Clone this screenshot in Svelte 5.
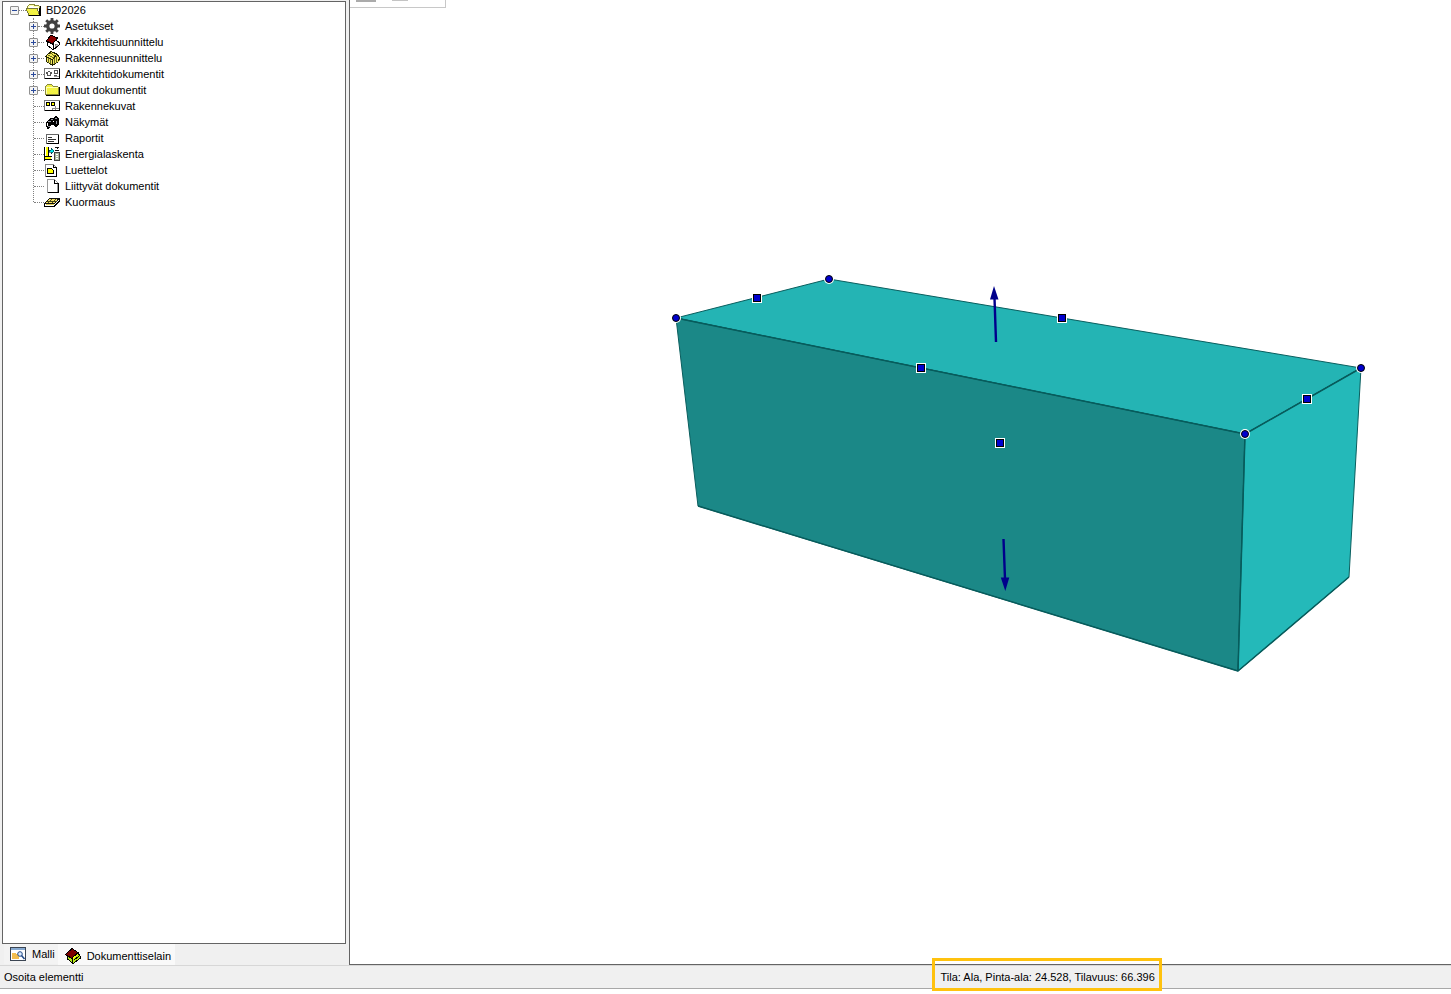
<script>
  const items = [
    { label: 'Asetukset', icon: 'gear', branch: true },
    { label: 'Arkkitehtisuunnittelu', icon: 'house', branch: true },
    { label: 'Rakennesuunnittelu', icon: 'frame', branch: true },
    { label: 'Arkkitehtidokumentit', icon: 'plan', branch: true },
    { label: 'Muut dokumentit', icon: 'folder', branch: true },
    { label: 'Rakennekuvat', icon: 'drawing' },
    { label: 'Näkymät', icon: 'camera' },
    { label: 'Raportit', icon: 'report' },
    { label: 'Energialaskenta', icon: 'energy' },
    { label: 'Luettelot', icon: 'list' },
    { label: 'Liittyvät dokumentit', icon: 'page' },
    { label: 'Kuormaus', icon: 'load' }
  ];
  const corners = [[676, 318], [829, 279], [1361, 368], [1245, 434]];
  const mids = [[757, 298], [1062, 318], [921, 368], [1307, 399], [1000, 443]];
  let open = $state(true);
  let tab = $state('browser');
</script>

{#snippet icon(name)}
  <svg class="icon" viewBox="0 0 16 16" shape-rendering="crispEdges" aria-hidden="true">
    {#if name === 'open'}
      <path d="M1.500 7V4.500l2-2h4l2 1h3l1 1v2" fill="#ffffb4" stroke="#8b8b38" />
      <path d="M0 6.500h11l2.500 7H3z" fill="url(#dither)" stroke="#77773a" />
      <path d="M3 13.500h12M14.500 4v10M13.500 6v7" fill="none" stroke="#000" />
      <path d="M4 4.500h3M3 5.500h9" stroke="#fff" />
    {:else if name === 'gear'}
      <g shape-rendering="auto" stroke="#414141" fill="none">
        <circle cx="8" cy="8" r="4.300" stroke-width="3.400" />
        <path d="M8 0v3M8 13v3M0 8h3M13 8h3M2.200 2.200l2.400 2.400M11.400 11.400l2.400 2.400M2.200 13.800l2.400-2.400M11.400 4.600l2.400-2.400" stroke-width="2.800" />
      </g>
    {:else if name === 'house'}
      <path d="M4 7.500L11 4l4 4v2.500l-6 4.500-5-3.500z" fill="#fff" stroke="none" />
      <path d="M3.500 8v3.500l5.500 4M9.500 10v5.500l5.500-4.500V8M11 5l4.500 4" fill="none" stroke="#000" />
      <path d="M2.500 7L7 1l6.500 3-5 6z" fill="#8b0000" stroke="#000" />
      <path d="M11 10h2v2h-2z" fill="#d0d0d0" stroke="#555" stroke-width=".5" />
    {:else if name === 'frame'}
      <path d="M1.500 6.500L7 1.500l5.500 2.500 3 3v4l-6 4-7-4z" fill="#f0e85c" />
      <path d="M1.500 6.500L7 1.500l6 2.500 2.500 3.500-1 4-6 4-6-4V7M2 6.500l6.500 3.500L13 4M8.500 10v5" fill="none" stroke="#222200" />
      <path d="M4.500 8v5M6.500 9v5M10.500 8v6M12.500 6v7M4 5l6 3M6 3l5 3" fill="none" stroke="#66661e" />
    {:else if name === 'plan'}
      <path d="M.5 2.500h15v10H.5z" fill="#fff" stroke="#777" />
      <path d="M1 12.500h14.500V3" fill="none" stroke="#000" />
      <path d="M2 7.500l3-2.500 3 2.500M3.500 7v2.500h3V7M9.500 4.500h4v3h-3v-3M10 9.500h3" fill="none" stroke="#555" />
      <path d="M10 10.500h5" stroke="#999" />
    {:else if name === 'folder'}
      <path d="M1.500 12.500v-8l2-2h4l2 2h4l1 1v7z" fill="url(#dither)" stroke="#8b8b38" />
      <path d="M2 5.500h12M2.500 5v7" fill="none" stroke="#ffffb0" />
      <path d="M2 13.500h13.500V5" fill="none" stroke="#000" />
    {:else if name === 'drawing'}
      <path d="M.5 2.500h15v10H.5z" fill="#fff" stroke="#777" />
      <path d="M1 12.500h14.500V3" fill="none" stroke="#000" />
      <path d="M2.500 4.500h3v3h-3zM7.500 4.500h3v3h-3z" fill="#ffff00" stroke="#000" />
      <path d="M8.500 12v-2h6M11.500 8v4" fill="none" stroke="#888" />
    {:else if name === 'camera'}
      <path d="M2 8l4-4 3 0 2-2 3 1 1 2v5l-3 3-3-2-2 0-1 3-3 1-1-4z" fill="#000" />
      <path d="M4 7h3v1H4zM7 5h2v1H7zM11 4h2v1h-2zM4 12h2v1H4zM12 7h1v3h-1z" fill="#999aa8" />
      <path d="M3 9h1v3H3zM9 7h1v1H9z" fill="#fff" />
    {:else if name === 'report'}
      <path d="M2.500 4.500h12v9h-12z" fill="#fff" stroke="#666" />
      <path d="M3 13.500h11.500V5" fill="none" stroke="#000" />
      <path d="M4 7.500h4M4 9.500h8M4 11.500h6" stroke="#333" />
    {:else if name === 'energy'}
      <path d="M2 1h2v10H2zM1 11h6v2H1z" fill="#ffff00" />
      <path d="M.5 1v14M4.500 1v9M1 10.500h7M1 13.500h7" fill="none" stroke="#000" stroke-width="1" />
      <path d="M5 4h2V2l3 3-3 3V6H5z" fill="#00e5ee" stroke="#000" stroke-width=".5" />
      <path d="M11 1.500h4M13.500 2v1M11 4.500h4" fill="none" stroke="#111" />
      <path d="M10.500 6.500h5v8h-5z" fill="#aab79e" stroke="#444" />
      <path d="M12 8.500h2M12 10.500h2M12 12.500h2" stroke="#fff" />
    {:else if name === 'list'}
      <path d="M1.500 2.500h8l3 3v9h-11z" fill="#fff" stroke="#888" />
      <path d="M2 14.500h10.500V5.500h-3v-3" fill="none" stroke="#000" />
      <path d="M3.500 6.500h4l2 2v3h-6z" fill="#ffff00" stroke="#000" />
    {:else if name === 'page'}
      <path d="M3.500 1.500h7l3 3v10h-10z" fill="#fff" stroke="#999" />
      <path d="M4 14.500h10.500V5.500h-4v-4" fill="none" stroke="#000" />
    {:else if name === 'load'}
      <path d="M5.500 4.500H15l-4.500 5H.5z" fill="#f2dd62" stroke="#111" />
      <path d="M.5 10v2h10L15.500 7V5" fill="none" stroke="#000" />
      <path d="M8 5l-4 4M12 5l-4 4M3 7.500h10" fill="none" stroke="#444416" />
      <path d="M2 10.500h8" stroke="#e0cc50" />
    {:else if name === 'model'}
      <path d="M.5 1.500h15v13H.5z" fill="#fff" stroke="#3b4552" />
      <path d="M1 2h14v2H1z" fill="#86a9d0" />
      <path d="M2 7h3l1 1h3v5H2z" fill="#f3bd4e" />
      <g shape-rendering="auto">
        <circle cx="10" cy="8" r="2.300" fill="#dcecff" stroke="#234a87" />
        <path d="M11.500 9.500l3 3.500" stroke="#234a87" stroke-width="1.600" />
      </g>
    {:else if name === 'browser'}
      <path d="M2.500 8v3l5.500 4.500 7-5V8L13 5z" fill="#b5e61d" stroke="#000" />
      <path d="M.5 6.500L7 .5l6 4-6 6z" fill="#7b0000" stroke="#000" />
      <path d="M7.500 11v4" stroke="#000" />
      <path d="M8 10.500l5.500-5" stroke="#ffff00" />
      <path d="M9 12l6-4.500" stroke="#000" />
    {/if}
  </svg>
{/snippet}

<svg class="defs" width="0" height="0" aria-hidden="true">
  <defs>
    <pattern id="dither" width="2" height="2" patternUnits="userSpaceOnUse">
      <path d="M0 0h2v2H0z" fill="#ffff20" />
      <path d="M0 0h1v1H0zM1 1h1v1H1z" fill="#e4e468" />
    </pattern>
  </defs>
</svg>

<div class="app">
  <main class="work">
    <aside class="side">
      <nav class="tree" aria-label="Dokumentit">
        <div class="row">
          <button class="toggle" class:plus={!open} aria-label="BD2026" aria-expanded={open} onclick={() => (open = !open)}></button>
          <span class="link short"></span>
          {@render icon('open')}
          <span class="name">BD2026</span>
        </div>
        {#if open}
          <ul>
            {#each items as item}
              <li class="row">
                {#if item.branch}
                  <button class="toggle plus" aria-label={item.label}></button>
                {:else}
                  <span class="blank"></span>
                {/if}
                <span class="link"></span>
                {@render icon(item.icon)}
                <span class="name">{item.label}</span>
              </li>
            {/each}
          </ul>
        {/if}
      </nav>
      <div class="tabs" role="tablist">
        <button role="tab" class="tab" class:active={tab === 'model'} aria-selected={tab === 'model'} onclick={() => (tab = 'model')}>
          {@render icon('model')}<span>Malli</span>
        </button>
        <button role="tab" class="tab" class:active={tab === 'browser'} aria-selected={tab === 'browser'} onclick={() => (tab = 'browser')}>
          {@render icon('browser')}<span>Dokumenttiselain</span>
        </button>
      </div>
    </aside>

    <section class="view" aria-label="3D">
      <div class="palette"><i></i><i class="small"></i></div>
      <svg class="scene" viewBox="350 0 1101 964" aria-hidden="true">
        <g stroke="#0a5e5e" stroke-width="1" stroke-linejoin="round">
          <path d="M676 318L829 279L1361 368L1245 434z" fill="#24b4b4" />
          <path d="M676 318L1245 434L1238 671L698 506z" fill="#1b8887" />
          <path d="M1245 434L1361 368L1349 577L1238 671z" fill="#24b9b9" />
          <path d="M676 318L1245 434L1361 368M1245 434L1238 671M698 506L1238 671L1349 577" fill="none" stroke="#075c5c" stroke-width="1.500" />
        </g>
        <g stroke="#00008b" fill="#00008b">
          <path d="M996 342L994.500 298M1003.500 539L1005 579" stroke-width="2.400" />
          <path d="M994 286l4.500 13.500h-8.500zM1005.300 591l-4.500-13.500h8.500z" stroke="none" />
        </g>
        {#each corners as [x, y]}
          <circle cx={x} cy={y} r="5" fill="#fff" />
          <circle cx={x} cy={y} r="3.500" fill="#0000cd" stroke="#000" />
        {/each}
        <g shape-rendering="crispEdges">
          {#each mids as [x, y]}
            <rect x={x - 5} y={y - 5} width="10" height="10" fill="#fff" />
            <rect x={x - 4} y={y - 4} width="8" height="8" fill="#000" />
            <rect x={x - 3} y={y - 3} width="6" height="6" fill="#0000cd" />
          {/each}
        </g>
      </svg>
    </section>
  </main>

  <footer class="status">
    <span class="prompt">Osoita elementti</span>
    <output class="info">Tila: Ala, Pinta-ala: 24.528, Tilavuus: 66.396</output>
  </footer>
</div>

<style>
  :global(body) { margin: 0; }
  .defs { position: absolute; }
  .app {
    display: flex;
    flex-direction: column;
    box-sizing: border-box;
    min-height: 100vh;
    padding-bottom: 5px;
    background: #fff;
    color: #000;
    font: 11px/16px "Liberation Sans", Arial, sans-serif;
  }
  .work { flex: 1; display: flex; background: #f0f0f0; }
  .side { flex: 0 0 349px; display: flex; flex-direction: column; }
  .tree {
    flex: 1;
    margin: 1px 3px 0 2px;
    padding-left: 7px;
    border: 1px solid #646464;
    background: #fff;
  }
  ul { list-style: none; margin: 0; padding: 0 0 0 19px; position: relative; }
  ul::before {
    content: "";
    position: absolute;
    left: 23px;
    top: 0;
    bottom: 8px;
    border-left: 1px dotted #808080;
  }
  .row { display: flex; align-items: center; height: 16px; white-space: nowrap; }
  .toggle {
    flex: none;
    position: relative;
    box-sizing: border-box;
    width: 9px;
    height: 9px;
    padding: 0;
    border: 1px solid #919191;
    border-radius: 1px;
    background: linear-gradient(#2b4a9b, #2b4a9b) center / 5px 1px no-repeat, #f4f4f4;
  }
  .toggle.plus {
    background: linear-gradient(#2b4a9b, #2b4a9b) center / 5px 1px no-repeat,
      linear-gradient(#2b4a9b, #2b4a9b) center / 1px 5px no-repeat, #f4f4f4;
  }
  .blank { width: 5px; }
  .blank + .link { width: 10px; }
  .link { width: 6px; border-top: 1px dotted #808080; }
  .link.short { width: 7px; }
  .icon { flex: none; width: 16px; height: 16px; }
  .name { margin-left: 5px; }
  .short + .icon + .name { margin-left: 4px; }
  .tabs { display: flex; height: 21px; padding-left: 4px; }
  .tab {
    display: flex;
    align-items: center;
    gap: 6px;
    height: 20px;
    padding: 0 3px 0 6px;
    border: 0;
    background: #f3f3f3;
    color: inherit;
    font: inherit;
  }
  .tab.active { height: 21px; padding: 2px 4px 0 7px; background: #f9f9f9; }
  .view {
    flex: 1;
    min-width: 0;
    position: relative;
    border-left: 1px solid #646464;
    border-bottom: 1px solid #646464;
    background: #fff;
  }
  .palette {
    position: absolute;
    left: 0;
    top: 0;
    display: flex;
    gap: 16px;
    box-sizing: border-box;
    width: 96px;
    height: 8px;
    padding-left: 6px;
    border: solid #c8c8c8;
    border-width: 0 1px 1px 0;
  }
  .palette i { width: 20px; height: 2px; background: #ababab; }
  .palette .small { width: 16px; height: 1px; background: #c4c4c4; }
  .scene { display: block; width: 100%; height: auto; }
  .status {
    display: flex;
    align-items: center;
    height: 22px;
    border-top: 1px solid #d7d7d7;
    border-bottom: 1px solid #a8a8a8;
    background: #f0f0f0;
  }
  .prompt { flex: 0 0 64.2%; box-sizing: border-box; padding-left: 4px; }
  .info {
    position: relative;
    height: 27px;
    margin: -7px 0 -2px;
    padding: 0 4px 0 6px;
    border: 3px solid #ffc20e;
    line-height: 32px;
    white-space: nowrap;
  }
</style>
